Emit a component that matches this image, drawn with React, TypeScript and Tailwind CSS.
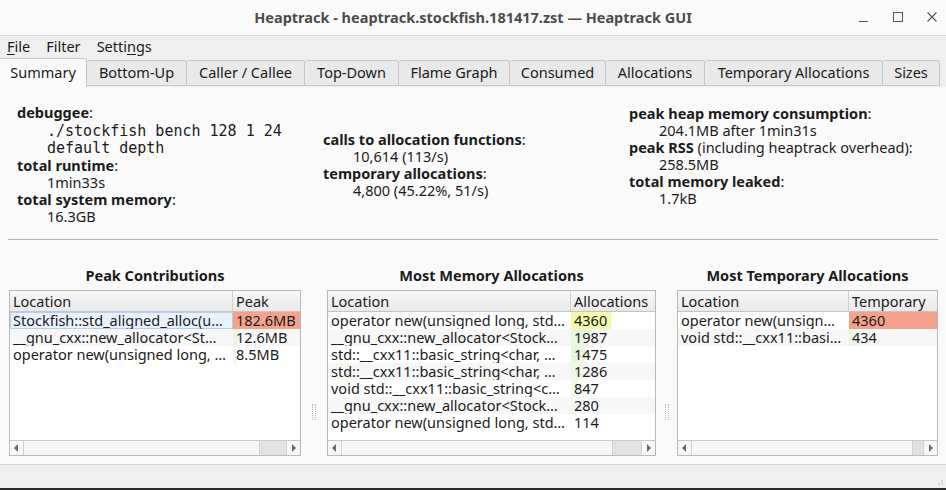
import React from "react";

type Row = { loc: string; val: string; bar: number; color: string };

const tabs = [
  { label: "Summary", w: "w-[87px]" },
  { label: "Bottom-Up", w: "w-[100px]" },
  { label: "Caller / Callee", w: "w-[118px]" },
  { label: "Top-Down", w: "w-[94px]" },
  { label: "Flame Graph", w: "w-[111px]" },
  { label: "Consumed", w: "w-[96px]" },
  { label: "Allocations", w: "w-[99px]" },
  { label: "Temporary Allocations", w: "w-[178px]" },
  { label: "Sizes", w: "w-[57px]" },
];

const peakRows: Row[] = [
  { loc: "Stockfish::std_aligned_alloc(u…", val: "182.6MB", bar: 100, color: "#f5a28c" },
  { loc: "__gnu_cxx::new_allocator<St…", val: "12.6MB", bar: 8, color: "#e9f7e4" },
  { loc: "operator new(unsigned long, …", val: "8.5MB", bar: 5, color: "#eef9ea" },
];

const allocRows: Row[] = [
  { loc: "operator new(unsigned long, std…", val: "4360", bar: 48, color: "#f3f9a9" },
  { loc: "__gnu_cxx::new_allocator<Stock…", val: "1987", bar: 22, color: "#eaf6df" },
  { loc: "std::__cxx11::basic_string<char, …", val: "1475", bar: 17, color: "#eaf6df" },
  { loc: "std::__cxx11::basic_string<char, …", val: "1286", bar: 14, color: "#edf8e6" },
  { loc: "void std::__cxx11::basic_string<c…", val: "847", bar: 9, color: "#f0f9ea" },
  { loc: "__gnu_cxx::new_allocator<Stock…", val: "280", bar: 3, color: "#f2faee" },
  { loc: "operator new(unsigned long, std…", val: "114", bar: 1, color: "#f4fbf0" },
];

const tempRows: Row[] = [
  { loc: "operator new(unsign…", val: "4360", bar: 100, color: "#f5a28c" },
  { loc: "void std::__cxx11::basi…", val: "434", bar: 11, color: "#e9f7e4" },
];

function Table({
  title,
  width,
  locW,
  valHeader,
  rows,
  thumbW,
  focusFirst,
}: {
  title: string;
  width: string;
  locW: string;
  valHeader: string;
  rows: Row[];
  thumbW: string;
  focusFirst?: boolean;
}) {
  return (
    <div className={`flex flex-col ${width}`}>
      <div className="h-[29px] pt-[1px] text-center font-bold text-[14.5px] leading-[27px] text-[#1a1a1a]">
        {title}
      </div>
      <div className="flex flex-col h-[166px] border border-[#b9b9b9] bg-white">
        <div className="flex h-[21px] border-b border-[#c4c4c4] bg-gradient-to-b from-[#f8f8f8] to-[#e9e9e9] text-[14.5px] leading-[21px]">
          <div className={`${locW} px-[3px] border-r border-[#cfcfcf]`}>Location</div>
          <div className="flex-1 px-[3px] whitespace-nowrap overflow-hidden">{valHeader}</div>
        </div>
        <div className="flex-1 flex flex-col">
          {rows.map((r, i) => (
            <div
              key={i}
              className={`flex h-[17px] text-[14.5px] leading-[16px] ${i % 2 === 1 ? "bg-[#f7f7f7]" : "bg-white"}`}
            >
              <div
                className={`${locW} pl-[3px] pr-[2px] whitespace-nowrap overflow-x-clip ${
                  focusFirst && i === 0 ? "bg-[#e9f2fb] shadow-[inset_0_0_0_1px_#b4cfe9]" : ""
                }`}
              >
                {r.loc}
              </div>
              <div className="flex-1 relative whitespace-nowrap">
                <div
                  className="absolute left-0 top-0 bottom-0"
                  style={{ width: `${r.bar}%`, backgroundColor: r.color }}
                />
                <span className="relative pl-[3px]">{r.val}</span>
              </div>
            </div>
          ))}
        </div>
        <div className="flex h-[15px] border-t border-[#c9c9c9] bg-[#f6f6f6]">
          <div className="w-[14px] flex items-center justify-center border-r border-[#d4d4d4]">
            <svg width="5" height="8" viewBox="0 0 5 8">
              <path d="M4 0 L0 4 L4 8 Z" fill="#6a6a6a" />
            </svg>
          </div>
          <div className="flex-1" />
          <div className={`${thumbW} bg-[#e2e2e2] border-l border-[#cfcfcf]`} />
          <div className="w-[14px] flex items-center justify-center border-l border-[#d4d4d4]">
            <svg width="5" height="8" viewBox="0 0 5 8">
              <path d="M1 0 L5 4 L1 8 Z" fill="#6a6a6a" />
            </svg>
          </div>
        </div>
      </div>
    </div>
  );
}

function Splitter({ w }: { w: string }) {
  return (
    <div className={`${w} flex items-end justify-center pb-[36px]`}>
      <div className="flex gap-[2px]">
        <div className="w-[1px] h-[16px] border-l border-dotted border-[#b8b8b8]" />
        <div className="w-[1px] h-[16px] border-l border-dotted border-[#b8b8b8]" />
      </div>
    </div>
  );
}

function Label({ b, rest }: { b: string; rest?: string }) {
  return (
    <div>
      <span className="font-bold">{b}</span>
      {rest ?? ":"}
    </div>
  );
}

export default function App() {
  return (
    <div className="w-[946px] h-[490px] flex flex-col overflow-hidden bg-[#fafafa] text-[#1b1b1b] font-['Noto_Sans',sans-serif]">
      {/* title bar */}
      <div className="h-[36px] flex items-center relative border-b border-[#d9d9d9] bg-[#fafafa]">
        <div className="flex-1 text-center font-bold text-[14.5px] text-[#4b4b4b]">
          Heaptrack - heaptrack.stockfish.181417.zst — Heaptrack GUI
        </div>
        <div className="absolute right-[8px] top-[11px] flex items-center gap-[22px]">
          <svg width="12" height="12" viewBox="0 0 12 12">
            <path d="M1 10.5 H10" stroke="#555" strokeWidth="1" />
          </svg>
          <svg width="12" height="12" viewBox="0 0 12 12">
            <rect x="1.5" y="1.5" width="9" height="9" fill="none" stroke="#555" strokeWidth="1" />
          </svg>
          <svg width="12" height="12" viewBox="0 0 12 12">
            <path d="M1.5 1.5 L10.5 10.5 M10.5 1.5 L1.5 10.5" stroke="#555" strokeWidth="1.1" />
          </svg>
        </div>
      </div>
      {/* menu */}
      <div className="h-[22px] flex items-center bg-[#efefef] text-[14.5px] pl-[7px] gap-[16px]">
        <span>
          <span className="underline underline-offset-2">F</span>ile
        </span>
        <span>Filter</span>
        <span>
          Setti<span className="underline underline-offset-2">n</span>gs
        </span>
      </div>
      {/* tabs */}
      <div className="h-[29px] flex items-end bg-[#efefef] text-[14.5px]">
        {tabs.map((t, i) =>
          i === 0 ? (
            <div
              key={t.label}
              className={`${t.w} h-[29px] flex items-center justify-center bg-[#fafafa] border-r border-t border-[#c6c6c6] rounded-tr-[3px]`}
            >
              {t.label}
            </div>
          ) : (
            <div
              key={t.label}
              className={`${t.w} h-[26px] flex items-center justify-center bg-[#e9e9e9] border border-l-0 border-[#c6c6c6] rounded-t-[3px] mb-[1px]`}
            >
              {t.label}
            </div>
          )
        )}
      </div>
      {/* content */}
      <div className="flex-1 flex flex-col bg-[#fafafa]">
        <div className="flex px-[17px] pt-[17px] text-[14.5px] leading-[17px]">
          <div className="w-[306px]">
            <Label b="debuggee" />
            <div className="pl-[30px] pt-[2px] font-['DejaVu_Sans_Mono',monospace] text-[15px]">
              <div>./stockfish bench 128 1 24</div>
              <div>default depth</div>
            </div>
            <Label b="total runtime" />
            <div className="pl-[30px]">1min33s</div>
            <Label b="total system memory" />
            <div className="pl-[30px]">16.3GB</div>
          </div>
          <div className="w-[306px] mt-[27px]">
            <Label b="calls to allocation functions" />
            <div className="pl-[30px]">10,614 (113/s)</div>
            <Label b="temporary allocations" />
            <div className="pl-[30px]">4,800 (45.22%, 51/s)</div>
          </div>
          <div className="flex-1 mt-[1px]">
            <Label b="peak heap memory consumption" />
            <div className="pl-[30px]">204.1MB after 1min31s</div>
            <Label b="peak RSS" rest=" (including heaptrack overhead):" />
            <div className="pl-[30px]">258.5MB</div>
            <Label b="total memory leaked" />
            <div className="pl-[30px]">1.7kB</div>
          </div>
        </div>
        <div className="mx-[8px] mt-[14px] border-t border-[#b3b3b3]" />
        <div className="flex pl-[9px] pt-[21px]">
          <Table
            title="Peak Contributions"
            width="w-[292px]"
            locW="w-[223px]"
            valHeader="Peak"
            rows={peakRows}
            thumbW="w-[27px]"
            focusFirst
          />
          <Splitter w="w-[26px]" />
          <Table
            title="Most Memory Allocations"
            width="w-[329px]"
            locW="w-[243px]"
            valHeader="Allocations"
            rows={allocRows}
            thumbW="w-[29px]"
          />
          <Splitter w="w-[21px]" />
          <Table
            title="Most Temporary Allocations"
            width="w-[261px]"
            locW="w-[171px]"
            valHeader="Temporary"
            rows={tempRows}
            thumbW="w-[11px]"
          />
        </div>
      </div>
      {/* status bar */}
      <div className="h-[24px] bg-[#efefef] border-t border-[#d2d2d2] flex items-end justify-end pr-[2px] pb-[2px]">
        <svg width="10" height="10" viewBox="0 0 10 10">
          <circle cx="8" cy="8" r="0.7" fill="#b0b0b0" />
          <circle cx="5" cy="8" r="0.7" fill="#b0b0b0" />
          <circle cx="8" cy="5" r="0.7" fill="#b0b0b0" />
        </svg>
      </div>
      <div className="h-[2px] bg-[#2a2a2a]" />
    </div>
  );
}
